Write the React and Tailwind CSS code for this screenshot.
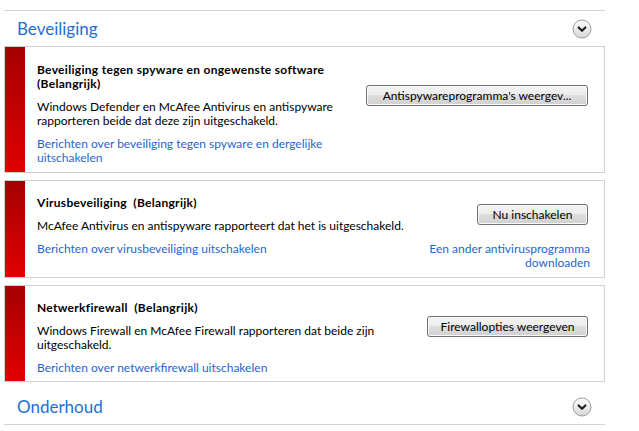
import React from "react";

const FONT = "font-['Lato','Noto_Sans',sans-serif]";
const LINK = "text-[#1f66cf]";

function Chevron({ id }) {
  return (
    <svg width="20" height="20" viewBox="0 0 20 20" className="block">
      <defs>
        <linearGradient id={id} x1="0" y1="0" x2="0" y2="1">
          <stop offset="0" stopColor="#ffffff" />
          <stop offset="1" stopColor="#d6d6d6" />
        </linearGradient>
      </defs>
      <circle cx="10" cy="10" r="9" fill={`url(#${id})`} stroke="#9c9c9c" strokeWidth="1" />
      <path d="M6.6 8.4 L10 11.8 L13.4 8.4" fill="none" stroke="#1e1e1e" strokeWidth="2.1" strokeLinecap="round" strokeLinejoin="round" />
    </svg>
  );
}

function Header({ title, id }) {
  return (
    <div className="h-[35px] flex items-center justify-between pl-[13px] pr-[13px]">
      <span className="text-[17px] leading-[22px] text-[#1e6fd6]">{title}</span>
      <Chevron id={id} />
    </div>
  );
}

function Button({ children, w }) {
  return (
    <div
      className={`${w} h-[21px] border border-[#707070] rounded-[3px] bg-[linear-gradient(#f3f3f3,#ececec_50%,#dedede_50%,#d0d0d0)] shadow-[inset_0_0_0_1px_#fbfbfb] flex items-center justify-center text-[12px] leading-[14px] text-black whitespace-nowrap`}
    >
      {children}
    </div>
  );
}

function Card({ title, body, link, button, rightLink, pt, pb }) {
  return (
    <div className="flex border border-[#d0d0d0] bg-white">
      <div className="w-[20px] shrink-0 bg-gradient-to-b from-[#a50000] to-[#e20000]" />
      <div className={`flex-1 grid grid-cols-[1fr_auto] gap-y-[9px] pl-[12px] pr-[16px] ${pt} ${pb} text-[12px] leading-[14px]`}>
        <div className="flex flex-col gap-[9px] whitespace-nowrap">
          <div className="font-bold text-black tracking-[0.3px]">{title}</div>
          <div className="text-black">{body}</div>
        </div>
        <div className="flex items-center justify-end">{button}</div>
        <div className={`${LINK} whitespace-nowrap`}>{link}</div>
        <div className={`${LINK} whitespace-nowrap text-right -mr-[2px]`}>{rightLink}</div>
      </div>
    </div>
  );
}

export default function App() {
  return (
    <div className={`w-[639px] h-[431px] bg-white overflow-hidden ${FONT}`}>
      <div className="ml-[4px] w-[601px] pt-[10px]">
        <div className="border-t border-[#d3d3d3]">
          <Header title="Beveiliging" id="c1" />
          <div className="flex flex-col gap-[7px]">
            <Card
              pt="pt-[16px]"
              pb="pb-[7px]"
              title={<>Beveiliging tegen spyware en ongewenste software<br />(Belangrijk)</>}
              body={<>Windows Defender en McAfee Antivirus en antispyware<br />rapporteren beide dat deze zijn uitgeschakeld.</>}
              link={<>Berichten over beveiliging tegen spyware en dergelijke<br />uitschakelen</>}
              button={<Button w="w-[222px]">Antispywareprogramma's weergev...</Button>}
            />
            <Card
              pt="pt-[15px]"
              pb="pb-[7px]"
              title={<>Virusbeveiliging&nbsp; (Belangrijk)</>}
              body={<>McAfee Antivirus en antispyware rapporteert dat het is uitgeschakeld.</>}
              link={<>Berichten over virusbeveiliging uitschakelen</>}
              button={<Button w="w-[111px]">Nu inschakelen</Button>}
              rightLink={<>Een ander antivirusprogramma<br />downloaden</>}
            />
            <Card
              pt="pt-[15px]"
              pb="pb-[6px]"
              title={<>Netwerkfirewall&nbsp; (Belangrijk)</>}
              body={<>Windows Firewall en McAfee Firewall rapporteren dat beide zijn<br />uitgeschakeld.</>}
              link={<>Berichten over netwerkfirewall uitschakelen</>}
              button={<Button w="w-[161px]">Firewallopties weergeven</Button>}
            />
          </div>
        </div>
        <div className="mt-[7px] border-b border-[#d3d3d3]">
          <Header title="Onderhoud" id="c2" />
        </div>
      </div>
    </div>
  );
}
